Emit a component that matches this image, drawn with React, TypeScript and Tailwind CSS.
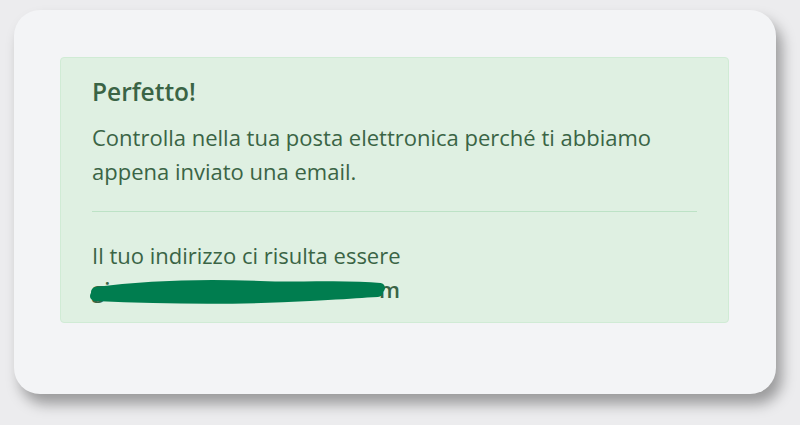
export default function App() {
  return (
    <div
      className="w-[800px] h-[425px] bg-[#ececee] pl-[14px] pt-[10px]"
      style={{ fontFamily: '"Open Sans", Lato, sans-serif' }}
    >
      <div className="w-[762px] h-[384px] rounded-[26px] bg-[#f3f4f6] shadow-[6px_10px_14px_rgba(0,0,0,0.35)] pl-[46px] pt-[47px]">
        <div className="w-[669px] h-[266px] rounded-[4px] border border-[#d0ebd5] bg-[#dff0e2] px-[31px] pt-[19px] text-[#3a6445]">
          <h4 className="text-[24.5px] font-semibold leading-[30px]">Perfetto!</h4>
          <p className="mt-[13px] text-[22px] leading-[34px]">
            Controlla nella tua posta elettronica perché ti abbiamo
            <br />
            appena inviato una email.
          </p>
          <hr className="mt-[23px] border-0 border-t border-[#bde2c6]" />
          <p className="mt-[26px] text-[22px] leading-[34px]">Il tuo indirizzo ci risulta essere</p>
          <div className="relative h-[34px] text-[22px] leading-[34px] font-semibold">
            <span>gi</span>
            <span className="absolute left-[287px] top-0">m</span>
            <svg className="absolute left-[-2px] top-[8px]" width="300" height="26" viewBox="0 0 300 26">
              <path
                d="M6 12 C 60 5, 120 4, 170 6 S 250 4, 290 8 M5 16 C 70 19, 150 20, 220 16 S 275 12, 288 12 M40 11 C 120 12, 200 12, 270 10"
                stroke="#007d4f"
                strokeWidth="10"
                fill="none"
                strokeLinecap="round"
              />
            </svg>
          </div>
        </div>
      </div>
    </div>
  );
}
